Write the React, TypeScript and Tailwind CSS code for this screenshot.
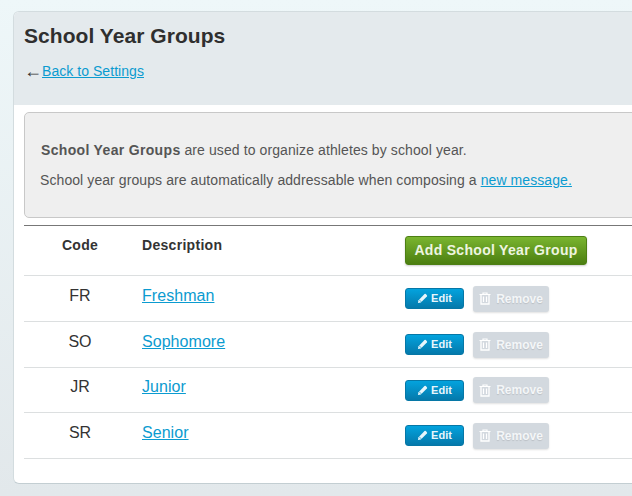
const rows = [
  { code: "FR", name: "Freshman", h: "h-[45px]" },
  { code: "SO", name: "Sophomore", h: "h-[45px]" },
  { code: "JR", name: "Junior", h: "h-[44px]" },
  { code: "SR", name: "Senior", h: "h-[45px]" },
];

function PencilIcon() {
  return (
    <svg width="11" height="11" viewBox="0 0 12 12" fill="none" className="shrink-0">
      <path d="M1 11l.7-3.2L8.2 1.2a1 1 0 0 1 1.4 0l1.2 1.2a1 1 0 0 1 0 1.4L4.2 10.3 1 11z" fill="#e8f6fc" />
      <path d="M2.4 7.4l2.2 2.2" stroke="#0a8fc4" strokeWidth="0.8" />
    </svg>
  );
}

function TrashIcon() {
  return (
    <svg width="12" height="13" viewBox="0 0 12 13" fill="none" className="shrink-0">
      <path d="M0.5 2.5h11M4 2.5V1h4v1.5" stroke="#fff" strokeWidth="1.2" />
      <path d="M2 2.5v9.5h8V2.5" stroke="#fff" strokeWidth="1.3" />
      <path d="M4.5 4.5v5.5M7.5 4.5v5.5" stroke="#fff" strokeWidth="1.2" />
    </svg>
  );
}

function Row({ code, name, h }: { code: string; name: string; h: string }) {
  return (
    <div className={`flex items-center border-b border-[#dcdfe0] ${h} box-content`}>
      <div className="w-[112px] text-center text-[16px] text-[#333] -mt-1.5">{code}</div>
      <div className="w-[269px] pl-[6px] -mt-1.5 text-[16px] tracking-[0.05px]">
        <a className="text-[#0b9bd0] underline">{name}</a>
      </div>
      <div className="flex items-center gap-[9px]">
        <button className="flex h-[21px] w-[59px] items-center justify-center gap-[3px] rounded-[3px] border border-[#0677a6] bg-linear-to-b from-[#03a3de] to-[#0479ab] text-[11px] font-bold text-[#e8f6fc]">
          <PencilIcon />
          Edit
        </button>
        <button className="flex h-[26px] w-[76px] items-center justify-center gap-[5px] rounded-[3px] bg-[#d3d9df] text-[12px] font-bold text-[#f4f6f8] shadow-[0_1px_2px_rgba(0,0,0,0.12)] [text-shadow:0_1px_1px_rgba(0,0,0,0.12)]">
          <TrashIcon />
          Remove
        </button>
      </div>
    </div>
  );
}

export default function App() {
  return (
    <div className="h-[496px] w-[632px] overflow-hidden bg-linear-to-b from-[#eef7f9] to-[#e2e8eb] pt-[11px] pl-[13px] font-['Liberation_Sans',Arial,sans-serif]">
      <div className="h-[473px] w-[700px] overflow-hidden rounded-[6px] border border-[#d3dcdf] border-b-[#c3ced2] bg-white">
        <div className="h-[93px] bg-[#e4eaed] pt-[11px] pl-[10px]">
          <h1 className="text-[21px] leading-[26px] font-bold tracking-[0.05px] text-[#2f2f2f]">School Year Groups</h1>
          <p className="mt-[12px] flex items-center text-[14px] leading-[20px] tracking-[0.05px] text-[#333]">
            <span className="w-[18px] text-[18px] leading-[20px]">←</span>
            <a className="text-[#0b9bd0] underline">Back to Settings</a>
          </p>
        </div>
        <div className="pt-[7px] pl-[10px]">
          <div className="h-[106px] w-[680px] rounded-[5px] border border-[#c8c8c8] bg-[#efefef] pt-[27px] pl-[15px] text-[14px] leading-[20px] text-[#555]">
            <p className="ml-px">
              <b className="tracking-[0.33px]">School Year Groups</b>{" "}
              <span className="tracking-[0.1px]">are used to organize athletes by school year.</span>
            </p>
            <p className="mt-[10px] tracking-[0.085px]">
              School year groups are automatically addressable when composing a{" "}
              <a className="text-[#0b9bd0] underline">new message.</a>
            </p>
          </div>
          <div className="mt-[7px] flex h-[49px] items-center border-t border-b border-t-[#777] border-b-[#dcdfe0] box-content">
            <div className="w-[112px] -mt-[11px] text-center text-[14px] font-bold tracking-[0.3px] text-[#333]">Code</div>
            <div className="w-[269px] -mt-[11px] pl-[6px] text-[14px] font-bold tracking-[0.3px] text-[#333]">Description</div>
            <button className="h-[29px] w-[182px] rounded-[3px] border border-[#4d7f14] bg-linear-to-b from-[#7ab52f] to-[#4c7f10] text-[14px] font-bold tracking-[0.3px] text-[#eef5e0] shadow-[0_1px_2px_rgba(0,0,0,0.2)]">
              Add School Year Group
            </button>
          </div>
          {rows.map((r) => (
            <Row key={r.code} {...r} />
          ))}
        </div>
      </div>
    </div>
  );
}
